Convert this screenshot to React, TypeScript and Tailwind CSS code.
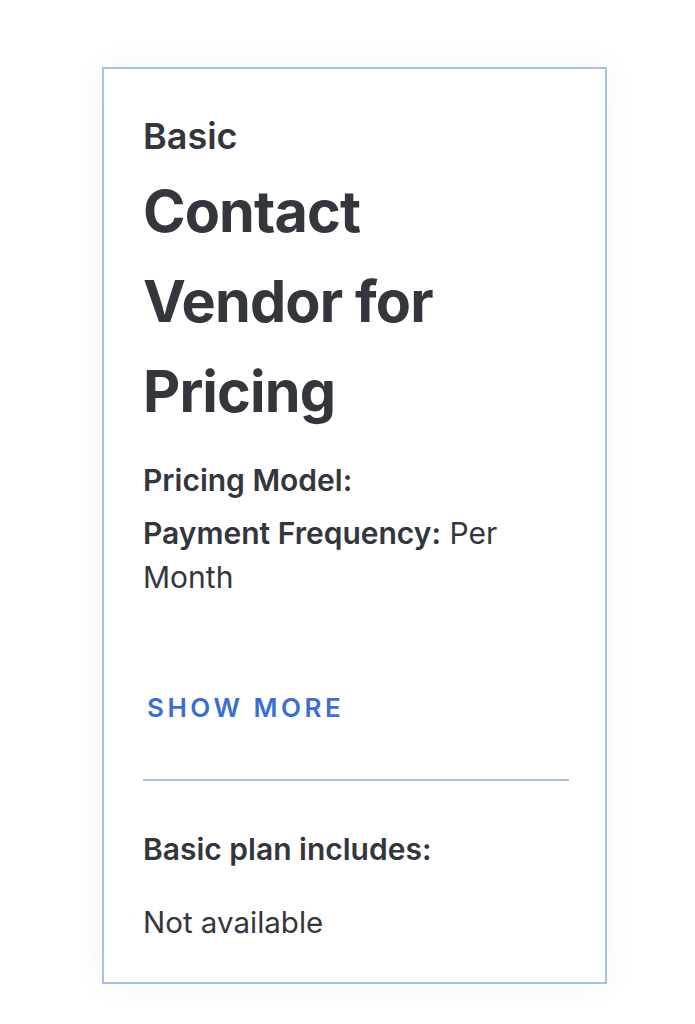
export default function App() {
  return (
    <div className="min-h-screen bg-white pt-[67px] pl-[102px]" style={{ fontFamily: "Inter, 'Noto Sans', sans-serif" }}>
      <div className="w-[505px] h-[917px] border-2 border-[#a9c0e3] bg-white shadow-[0_0_30px_rgba(0,0,0,0.05)] pl-[39px] pr-[36px] pt-[47px] text-[#33363d]">
        <p className="text-[36px] font-semibold leading-[40px]">Basic</p>
        <h1 className="mt-[10px] w-[400px] text-[57.5px] font-bold leading-[90px] tracking-[-0.015em]">
          Contact Vendor for Pricing
        </h1>
        <p className="mt-[22px] text-[30px] font-semibold leading-[44px]">Pricing Model:</p>
        <p className="mt-[9px] text-[30px] leading-[44px]">
          <span className="font-semibold">Payment Frequency:</span> Per Month
        </p>
        <button className="mt-[89px] ml-[4px] block text-[26px] font-semibold tracking-[0.135em] text-[#3a6fcf]">
          SHOW MORE
        </button>
        <div className="mt-[52px] h-[2px] bg-[#a4bde0]" />
        <p className="mt-[48px] text-[30px] font-semibold leading-[40px]">Basic plan includes:</p>
        <p className="mt-[33px] text-[29.5px] leading-[40px]">Not available</p>
      </div>
    </div>
  );
}
